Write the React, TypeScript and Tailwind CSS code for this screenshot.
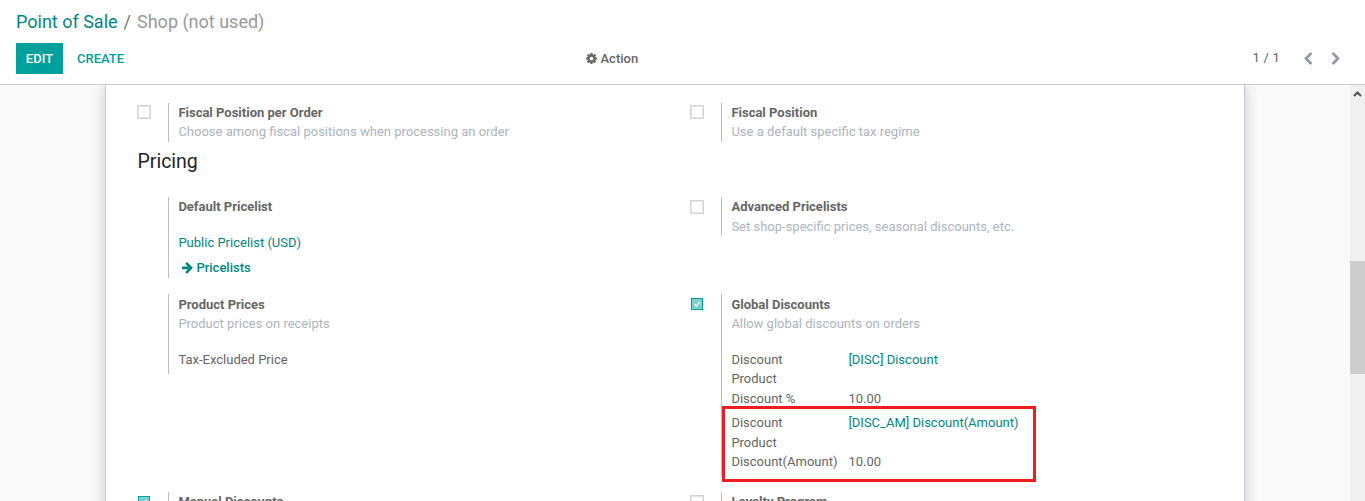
import type { ReactNode } from "react";

const icons = {
  cog: "M1152 896q0-106-75-181t-181-75-181 75-75 181 75 181 181 75 181-75 75-181zm512-109v222q0 12-8 23t-20 13l-185 28q-19 54-39 91 35 50 107 138 10 12 10 25t-9 23q-27 37-99 108t-94 71q-12 0-26-9l-138-108q-44 23-91 38-16 136-29 186-7 28-36 28h-222q-14 0-24.5-8.5t-11.5-21.5l-28-184q-49-16-90-37l-141 107q-10 9-25 9-14 0-25-11-126-114-165-168-7-10-7-23 0-12 8-23 15-21 51-66.5t54-70.5q-27-50-41-99l-183-27q-13-2-21-12.5t-8-23.5v-222q0-12 8-23t19-13l186-28q14-46 39-92-40-57-107-138-10-12-10-24 0-10 9-23 26-36 98.5-107.5t94.5-71.5q13 0 26 10l138 107q44-23 91-38 16-136 29-186 7-28 36-28h222q14 0 24.5 8.5t11.5 21.5l28 184q49 16 90 37l142-107q9-9 24-9 13 0 25 10 129 119 165 170 7 8 7 22 0 12-8 23-15 21-51 66.5t-54 70.5q26 50 41 98l183 28q13 2 21 12.5t8 23.5z",
  arrowRight:
    "M1600 960q0 54-37 91l-651 651q-39 37-91 37-51 0-90-37l-75-75q-38-38-38-91t38-91l293-293h-704q-52 0-84.5-37.5t-32.5-90.5v-128q0-53 32.5-90.5t84.5-37.5h704l-293-294q-38-36-38-90t38-90l75-75q38-38 90-38 53 0 91 38l651 651q37 35 37 90z",
  chevronLeft:
    "M1427 301l-531 531 531 531q19 19 19 45t-19 45l-166 166q-19 19-45 19t-45-19l-742-742q-19-19-19-45t19-45l742-742q19-19 45-19t45 19l166 166q19 19 19 45t-19 45z",
  chevronRight:
    "M1363 877l-742 742q-19 19-45 19t-45-19l-166-166q-19-19-19-45t19-45l531-531-531-531q-19-19-19-45t19-45l166-166q19-19 45-19t45 19l742 742q19 19 19 45t-19 45z",
};

function Icon({ name, className }: { name: keyof typeof icons; className: string }) {
  return (
    <svg viewBox="0 0 1792 1792" className={className} fill="currentColor" aria-hidden="true">
      <path d={icons[name]} />
    </svg>
  );
}

function Checkbox({ checked }: { checked: boolean }) {
  if (checked) {
    return (
      <span className="mt-1 ml-px flex size-3 items-center justify-center border border-[#00a09d] bg-[#7fcfce]">
        <svg viewBox="0 0 8 8" className="size-2" fill="none" stroke="white" strokeWidth="1.2">
          <path d="M1.5 4 L3.3 5.8 L6.7 2.2" />
        </svg>
      </span>
    );
  }
  return <span className="block size-3.5 border border-[#d5d5d5] bg-[#fcfcfc] shadow-[inset_0_0_0_1px_#e6e6e6]" />;
}

type SettingProps = {
  title: string;
  description?: string;
  checked?: boolean;
  boxTop?: string;
  bodyTop?: string;
  children?: ReactNode;
};

function Setting({ title, description, checked, boxTop = "pt-[2.4px]", bodyTop = "pt-0", children }: SettingProps) {
  return (
    <section className="flex items-start">
      <div className={`w-[31px] shrink-0 ${boxTop}`}>{checked !== undefined && <Checkbox checked={checked} />}</div>
      <div className={`w-[420px] border-l border-[#bdbdbd] pl-[9.4px] ${bodyTop}`}>
        <h3 className="font-bold text-[#666666]">{title}</h3>
        {description && <p className="text-[#adb5bd]">{description}</p>}
        {children}
      </div>
    </section>
  );
}

function Field({ label, children }: { label: string; children: ReactNode }) {
  return (
    <div className="flex">
      <div className="w-[117px] shrink-0 pr-8">{label}</div>
      <div>{children}</div>
    </div>
  );
}

export default function App() {
  return (
    <div className="flex h-[501px] w-[1365px] flex-col overflow-hidden bg-white font-['Roboto',sans-serif] text-[13px] leading-[19.5px] text-[#666666]">
      <header className="h-[85px] shrink-0 border-b border-[#cccccc] px-4 pt-2">
        <nav className="flex h-[27px] items-center text-[18px] leading-[27px]">
          <a className="text-[#008784]">Point of Sale</a>
          <span className="px-[6px] text-[#6c757d]">/</span>
          <span className="text-[#999999]">Shop (not used)</span>
        </nav>
        <div className="mt-2 flex h-[31px] items-center">
          <div className="flex w-[569px] items-center">
            <button className="h-[31px] w-[47px] bg-[#00a09d] font-medium text-white">EDIT</button>
            <button className="ml-[14px] font-medium text-[#00a09d]">CREATE</button>
          </div>
          <button className="flex items-center gap-[2.5px] font-medium">
            <Icon name="cog" className="size-[13px]" />
            Action
          </button>
          <div className="ml-auto flex items-center">
            <span className="mr-[21px] -mt-0.5 tracking-[0.2px]">1 / 1</span>
            <Icon name="chevronLeft" className="mr-[13.5px] size-[14px] text-[#949ba5]" />
            <Icon name="chevronRight" className="mr-[6.5px] size-[14px] text-[#949ba5]" />
          </div>
        </div>
      </header>

      <div className="flex min-h-0 flex-1">
        <main className="flex flex-1 justify-center overflow-hidden bg-[#f9f9f9]">
          <div className="h-[440px] w-[1140px] border-x border-[#c8c8d3] bg-white pl-[31px] shadow-[0_0_14px_-1px_rgba(0,0,0,0.22)]">
            <div className="grid h-[57px] grid-cols-[553px_1fr] items-start pt-[17.6px]">
              <Setting title="Fiscal Position per Order" description="Choose among fiscal positions when processing an order" checked={false} />
              <Setting title="Fiscal Position" description="Use a default specific tax regime" checked={false} />
            </div>
            <h2 className="h-[55px] pt-[5px] pl-[0.5px] text-[19.5px] leading-[30px] text-[#212529]">Pricing</h2>
            <div className="grid h-[97px] grid-cols-[553px_1fr] items-start">
              <Setting title="Default Pricelist">
                <div className="pt-4 text-[#008784]">Public Pricelist (USD)</div>
                <div className="mt-[5.5px] flex items-center gap-[2px] pb-px pl-[3px] font-medium text-[#008784]">
                  <Icon name="arrowRight" className="size-[13px]" />
                  Pricelists
                </div>
              </Setting>
              <Setting title="Advanced Pricelists" description="Set shop-specific prices, seasonal discounts, etc." checked={false} boxTop="pt-[3px]" />
            </div>
            <div className="grid h-[198px] grid-cols-[553px_1fr] items-start">
              <Setting title="Product Prices" description="Product prices on receipts" bodyTop="pt-[0.5px]">
                <div className="pt-4 pb-[5px]">Tax-Excluded Price</div>
              </Setting>
              <div className="relative">
                <Setting title="Global Discounts" description="Allow global discounts on orders" checked={true} boxTop="pt-0" bodyTop="pt-[0.5px]">
                  <div className="pt-4 pb-[4.5px]">
                    <Field label="Discount Product">
                      <span className="text-[#008784]">[DISC] Discount</span>
                    </Field>
                    <Field label="Discount&nbsp;%">10.00</Field>
                    <div className="pt-[5px]">
                      <Field label="Discount Product">
                        <span className="text-[#008784]">[DISC_AM] Discount(Amount)</span>
                      </Field>
                      <Field label="Discount(Amount)">10.00</Field>
                    </div>
                  </div>
                </Setting>
                <div className="absolute top-[112px] left-[32px] h-[76px] w-[314px] border-[3px] border-[#ed1c24]" />
              </div>
            </div>
            <div className="grid grid-cols-[553px_1fr] items-start">
              <Setting title="Manual Discounts" checked={true} boxTop="pt-0" />
              <Setting title="Loyalty Program" checked={false} boxTop="pt-[3px]" />
            </div>
          </div>
        </main>
        <aside className="flex w-[15px] shrink-0 flex-col items-center bg-[#f0f0f0]">
          <svg viewBox="0 0 15 17" className="h-[17px] w-[15px]" fill="none" stroke="#505050" strokeWidth="2">
            <path d="M4 11 L7.5 7.5 L11 11" />
          </svg>
          <div className="mt-[159px] h-[113px] w-full bg-[#cdcdcd]" />
        </aside>
      </div>
    </div>
  );
}
